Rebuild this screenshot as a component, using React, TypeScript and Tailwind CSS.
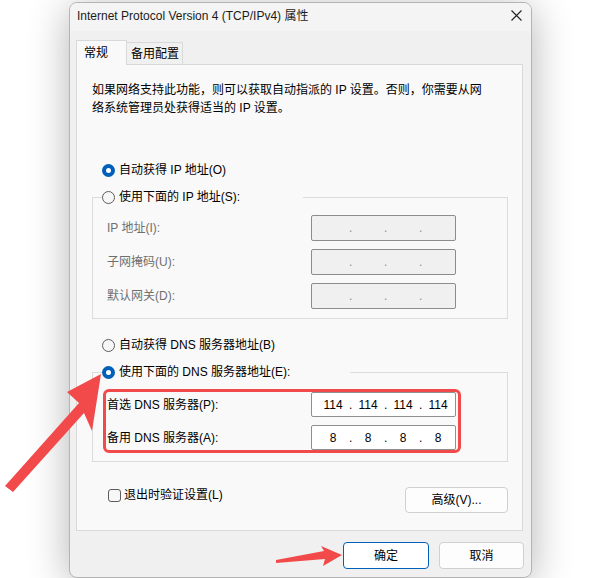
import React from 'react';

const font = "font-['Liberation_Sans','Noto_Sans_CJK_SC',sans-serif]";

const Radio: React.FC<{ checked?: boolean }> = ({ checked }) =>
  checked ? (
    <span className="w-[13px] h-[13px] rounded-full bg-[#005fb8] flex items-center justify-center shrink-0">
      <span className="w-[5px] h-[5px] rounded-full bg-white" />
    </span>
  ) : (
    <span className="w-[13px] h-[13px] rounded-full border border-[#5c5c5c] bg-[#f7f7f7] shrink-0" />
  );

// dotted address box, empty values when disabled
const IpBox: React.FC<{ parts?: string[]; disabled?: boolean; h: string }> = ({ parts, disabled, h }) => {
  const vals = parts ?? ['', '', '', ''];
  return (
    <div
      className={`w-[145px] ${h} flex items-center pl-[5px] border rounded-[2px] ${
        disabled ? 'bg-[#f0f0f0] border-[#8c8c8c] text-[#8a8a8a]' : 'bg-white border-[#8f8f8f] text-black'
      }`}
    >
      {vals.map((v, i) => (
        <React.Fragment key={i}>
          {i > 0 && <span className="w-[3px] text-center">.</span>}
          <span className="w-[32px] text-center">{v}</span>
        </React.Fragment>
      ))}
    </div>
  );
};

const App: React.FC = () => {
  return (
    <div className={`relative w-[600px] h-[578px] bg-white overflow-hidden text-[12px] leading-[18px] text-black ${font}`}>
      <div className="ml-[69px] mt-[2px] w-[463px] h-[576px] flex flex-col rounded-[8px] border border-[#b4b4b4] bg-[#f0f0f0] shadow-[0_6px_40px_rgba(0,0,0,0.3)] overflow-hidden">
        {/* title bar */}
        <div className="h-[28px] flex items-center justify-between pl-[7px] pr-[9px] pb-[3px] bg-[#f4f4f4] shrink-0">
          <span className="text-[#1b1b1b]">Internet Protocol Version 4 (TCP/IPv4) 属性</span>
          <svg width="11" height="11" viewBox="0 0 11 11" className="text-[#222]">
            <path d="M0.5 0.5 L10.5 10.5 M10.5 0.5 L0.5 10.5" stroke="currentColor" strokeWidth="1.1" />
          </svg>
        </div>

        {/* body */}
        <div className="flex flex-col pt-[9px] pl-[6px] pr-[7px]">
          <div className="flex items-end h-[24px]">
            <div className="relative z-10 -mb-px w-[51px] h-[25px] pl-[7px] flex items-center bg-[#f9f9f9] border-l border-t border-r border-[#d9d9d9]">
              常规
            </div>
            <div className="w-[56px] h-[22px] pl-[4px] flex items-center bg-[#f0f0f0] border-t border-r border-[#d9d9d9]">
              备用配置
            </div>
          </div>

          <div className="w-[447px] h-[467px] border border-[#d9d9d9] bg-[#f9f9f9] pl-[15px] pr-[14px] flex flex-col">
            <p className="mt-[16px] whitespace-nowrap">
              如果网络支持此功能，则可以获取自动指派的 IP 设置。否则，你需要从网
              <br />
              络系统管理员处获得适当的 IP 设置。
            </p>

            <div className="mt-[44px] ml-[10px] flex items-center gap-[4px] h-[18px]">
              <Radio checked />
              <span>自动获得 IP 地址(O)</span>
            </div>

            <fieldset className="mt-[9px] border border-[#dcdcdc] pt-[9px] pb-[9px]">
              <legend className="ml-[9px] w-[201px] h-[18px] flex items-center gap-[4px]">
                <Radio />
                <span>使用下面的 IP 地址(S):</span>
              </legend>
              <div className="flex flex-col gap-[8px] text-[#6f6f6f]">
                {['IP 地址(I):', '子网掩码(U):', '默认网关(D):'].map((l) => (
                  <div key={l} className="flex items-center pl-[14px]">
                    <span className="w-[204px]">{l}</span>
                    <IpBox disabled h="h-[26px]" />
                  </div>
                ))}
              </div>
            </fieldset>

            <div className="mt-[17px] ml-[10px] flex items-center gap-[4px] h-[18px]">
              <Radio />
              <span>自动获得 DNS 服务器地址(B)</span>
            </div>

            <fieldset className="mt-[9px] border border-[#dcdcdc] pt-[8px] pb-[8px]">
              <legend className="ml-[9px] w-[248px] h-[18px] flex items-center gap-[4px]">
                <Radio checked />
                <span>使用下面的 DNS 服务器地址(E):</span>
              </legend>
              <div className="ml-[10px] w-[358px] border-[3px] border-[#f24a4a] rounded-[6px] pl-[1px] pr-[2px] flex flex-col gap-[8px]">
                <div className="flex items-center">
                  <span className="w-[204px]">首选 DNS 服务器(P):</span>
                  <IpBox parts={['114', '114', '114', '114']} h="h-[25px]" />
                </div>
                <div className="flex items-center">
                  <span className="w-[204px]">备用 DNS 服务器(A):</span>
                  <IpBox parts={['8', '8', '8', '8']} h="h-[25px]" />
                </div>
              </div>
            </fieldset>

            <div className="mt-[24px] h-[27px] flex items-start justify-between">
              <div className="ml-[16px] h-[18px] flex items-center gap-[3px]">
                <span className="w-[13px] h-[13px] rounded-[3px] border border-[#5c5c5c] bg-[#f7f7f7]" />
                <span>退出时验证设置(L)</span>
              </div>
              <button className="mt-[1px] w-[103px] h-[26px] rounded-[4px] border border-[#d0d0d0] bg-[#fdfdfd] flex items-center justify-center">
                高级(V)...
              </button>
            </div>
          </div>

          <div className="mt-[11px] flex justify-end gap-[10px]">
            <button className="w-[86px] h-[27px] rounded-[4px] border border-[#005fb8] bg-white flex items-center justify-center">
              确定
            </button>
            <button className="w-[85px] h-[27px] rounded-[4px] border border-[#d0d0d0] bg-[#fdfdfd] flex items-center justify-center">
              取消
            </button>
          </div>
        </div>
      </div>

      {/* annotation arrows */}
      <svg className="absolute inset-0 pointer-events-none" width="600" height="578" viewBox="0 0 600 578">
        <polygon
          points="101,374 92,431 84,413 13,492 5,486 79,403 67,392"
          fill="#f24a4a"
        />
        <polygon
          points="342,555 323,566 325,559 276,563 276,560 324,551 321,546"
          fill="#f24a4a"
        />
      </svg>
    </div>
  );
};

export default App;
